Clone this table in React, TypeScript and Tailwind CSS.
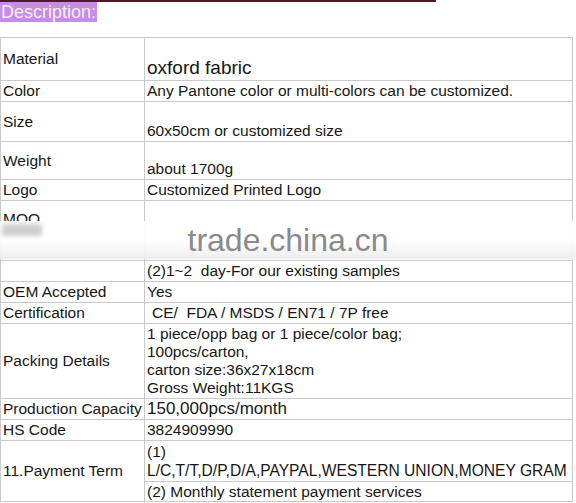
import React from "react";

const cell = "border border-[#c9c9c9] px-[2px] text-[15.5px] leading-[18px] text-[#161616]";

export default function App() {
  return (
    <div className="relative w-[576px] h-[503px] bg-white overflow-hidden" style={{ fontFamily: '"Liberation Sans", Arial, sans-serif' }}>
      <div className="w-[436px] h-[2px] bg-[#4b1b25]" />
      <div className="w-fit bg-[#c68ce6] px-[1px] h-[20px] text-[18px] leading-[20px] text-[#f6f0fb]">Description:</div>
      <table className="mt-[15px] border-collapse table-fixed w-[573px]">
        <colgroup>
          <col className="w-[144px]" />
          <col />
        </colgroup>
        <tbody>
          <tr>
            <td className={`${cell} h-[43px] align-middle`}>Material</td>
            <td className={`${cell} h-[43px] align-bottom pb-[1px] text-[19px] leading-[22px]`}>oxford fabric</td>
          </tr>
          <tr>
            <td className={`${cell} h-[21px]`}>Color</td>
            <td className={`${cell} h-[21px]`}>Any Pantone color or multi-colors can be customized.</td>
          </tr>
          <tr>
            <td className={`${cell} h-[40px] align-middle`}>Size</td>
            <td className={`${cell} h-[40px] align-bottom pb-[1px]`}>60x50cm or customized size</td>
          </tr>
          <tr>
            <td className={`${cell} h-[38px] align-middle`}>Weight</td>
            <td className={`${cell} h-[38px] align-bottom pb-[1px]`}>about 1700g</td>
          </tr>
          <tr>
            <td className={`${cell} h-[21px]`}>Logo</td>
            <td className={`${cell} h-[21px]`}>Customized Printed Logo</td>
          </tr>
          <tr>
            <td className={`${cell} h-[60px] align-top pt-[9px]`}>MOO</td>
            <td className={`${cell} h-[60px]`}></td>
          </tr>
          <tr>
            <td className={`${cell} h-[21px]`}></td>
            <td className={`${cell} h-[21px]`}>(2)1~2&nbsp; day-For our existing samples</td>
          </tr>
          <tr>
            <td className={`${cell} h-[21px]`}>OEM Accepted</td>
            <td className={`${cell} h-[21px]`}>Yes</td>
          </tr>
          <tr>
            <td className={`${cell} h-[21px]`}>Certification</td>
            <td className={`${cell} h-[21px] pl-[7px]`}>CE/&nbsp; FDA / MSDS / EN71 / 7P free</td>
          </tr>
          <tr>
            <td className={`${cell} h-[75px] align-middle`}>Packing Details</td>
            <td className={`${cell} h-[75px] align-middle leading-[18px]`}>
              <div>1 piece/opp bag or 1 piece/color bag;</div>
              <div>100pcs/carton,</div>
              <div>carton size:36x27x18cm</div>
              <div>Gross Weight:11KGS</div>
            </td>
          </tr>
          <tr>
            <td className={`${cell} h-[21px] whitespace-nowrap`}>Production Capacity</td>
            <td className={`${cell} h-[21px] text-[17px]`}>150,000pcs/month</td>
          </tr>
          <tr>
            <td className={`${cell} h-[21px]`}>HS Code</td>
            <td className={`${cell} h-[21px]`}>3824909990</td>
          </tr>
          <tr>
            <td rowSpan={2} className={`${cell} align-middle`}>11.Payment Term</td>
            <td className={`${cell} h-[41px] leading-[19px] whitespace-nowrap`}>
              <div>(1)</div>
              <div className="text-[15.6px]">L/C,T/T,D/P,D/A,PAYPAL,WESTERN UNION,MONEY GRAM</div>
            </td>
          </tr>
          <tr>
            <td className={`${cell} h-[20px]`}>(2) Monthly statement payment services</td>
          </tr>
        </tbody>
      </table>

      {/* watermark band */}
      <div className="absolute left-0 top-[221px] w-[576px] h-[38px] bg-gradient-to-b from-white via-white to-[#ececec] opacity-95" />
      <div className="absolute left-[2px] top-[224px] w-[40px] h-[12px] bg-[#cfcfcf] blur-[2px]" />
      <div className="absolute left-0 top-[221px] w-[576px] h-[38px] flex items-center justify-center">
        <span className="text-[32px] leading-[36px] text-[#8a8a8a]">trade.china.cn</span>
      </div>
    </div>
  );
}
